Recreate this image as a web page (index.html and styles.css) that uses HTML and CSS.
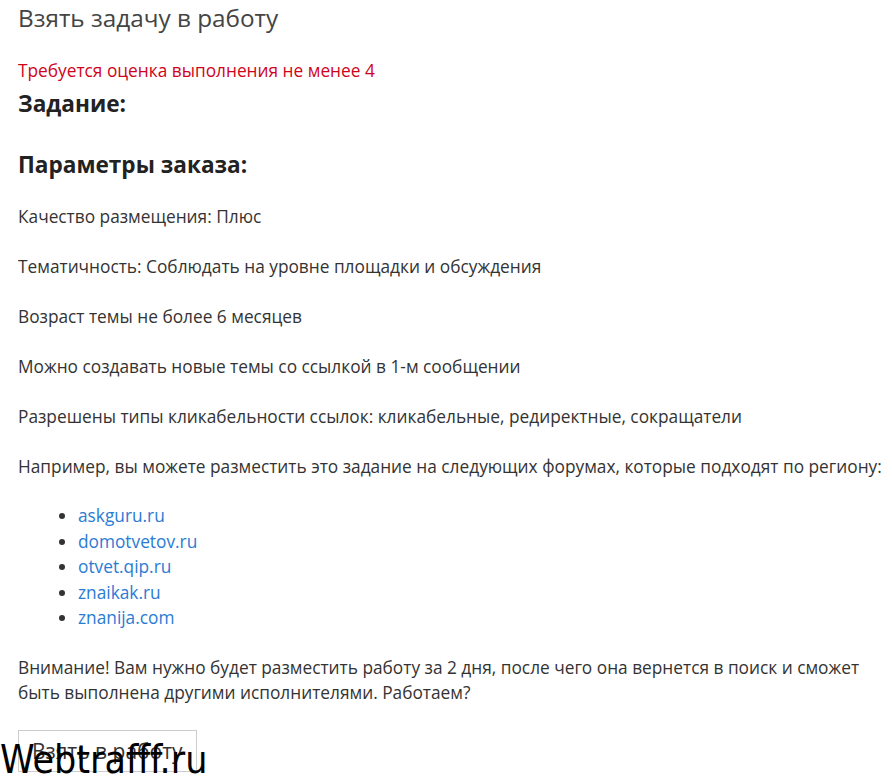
FILE: index.html
```html
<!DOCTYPE html>
<html lang="ru">
<head>
  <meta charset="UTF-8" />
  <title>Взять задачу в работу</title>
  <link rel="stylesheet" href="styles.css">
</head>
<body>
  <div class="task-page">
    <h1 class="task-title">Взять задачу в работу</h1>
    <p class="task-warning">Требуется оценка выполнения не менее 4</p>
    <h2 class="task-heading">Задание:</h2>
    <h2 class="task-heading params">Параметры заказа:</h2>

    <p class="task-line">Качество размещения: Плюс</p>
    <p class="task-line">Тематичность: Соблюдать на уровне площадки и обсуждения</p>
    <p class="task-line">Возраст темы не более 6 месяцев</p>
    <p class="task-line">Можно создавать новые темы со ссылкой в 1-м сообщении</p>
    <p class="task-line">Разрешены типы кликабельности ссылок: кликабельные, редиректные, сокращатели</p>
    <p class="task-line">Например, вы можете разместить это задание на следующих форумах, которые подходят по региону:</p>

    <ul class="forum-list">
      <li><a href="#">askguru.ru</a></li>
      <li><a href="#">domotvetov.ru</a></li>
      <li><a href="#">otvet.qip.ru</a></li>
      <li><a href="#">znaikak.ru</a></li>
      <li><a href="#">znanija.com</a></li>
    </ul>

    <p class="task-note">Внимание! Вам нужно будет разместить работу за 2 дня, после чего она вернется в поиск и сможет быть выполнена другими исполнителями. Работаем?</p>

    <button class="take-button">Взять в работу</button>
  </div>

  <div class="watermark">Webtrafff.ru</div>
</body>
</html>
```

FILE: styles.css
```css
body {
  font-family: "Open Sans", Arial, sans-serif;
  color: #333;
  background: #fff;
  margin: 0;
  padding: 0 0 0 18px;
}
.task-page {
  font-size: 17.3px;
}
.task-title {
  font-size: 24.3px;
  font-weight: normal;
  color: #444;
  margin: 1px 0 0;
  line-height: 34px;
}
.task-warning {
  color: #d0021b;
  margin: 26px 0 0;
  line-height: 20px;
}
.task-heading {
  font-size: 22.6px;
  font-weight: bold;
  color: #222;
  margin: 8px 0 0;
  line-height: 30px;
}
.task-heading.params {
  margin-top: 31px;
}
.task-line {
  margin: 20px 0 0;
  line-height: 30px;
}
.task-heading + .task-line {
  margin-top: 22px;
}
.forum-list {
  margin: 21px 0 0;
  padding-left: 60px;
  line-height: 25.5px;
}
.forum-list a {
  color: #2a7bd4;
  text-decoration: none;
}
.task-note {
  margin: 24px 0 0;
  line-height: 25px;
}
.take-button {
  margin-top: 25px;
  font-family: inherit;
  font-size: 21px;
  color: #333;
  background: #fff;
  border: 1px solid #ccc;
  padding: 6px 13px;
}
.watermark {
  position: absolute;
  left: 0;
  top: 738px;
  font-family: "DejaVu Sans Condensed", "DejaVu Sans", sans-serif;
  font-size: 39px;
  color: #000;
  line-height: 44px;
}
```
